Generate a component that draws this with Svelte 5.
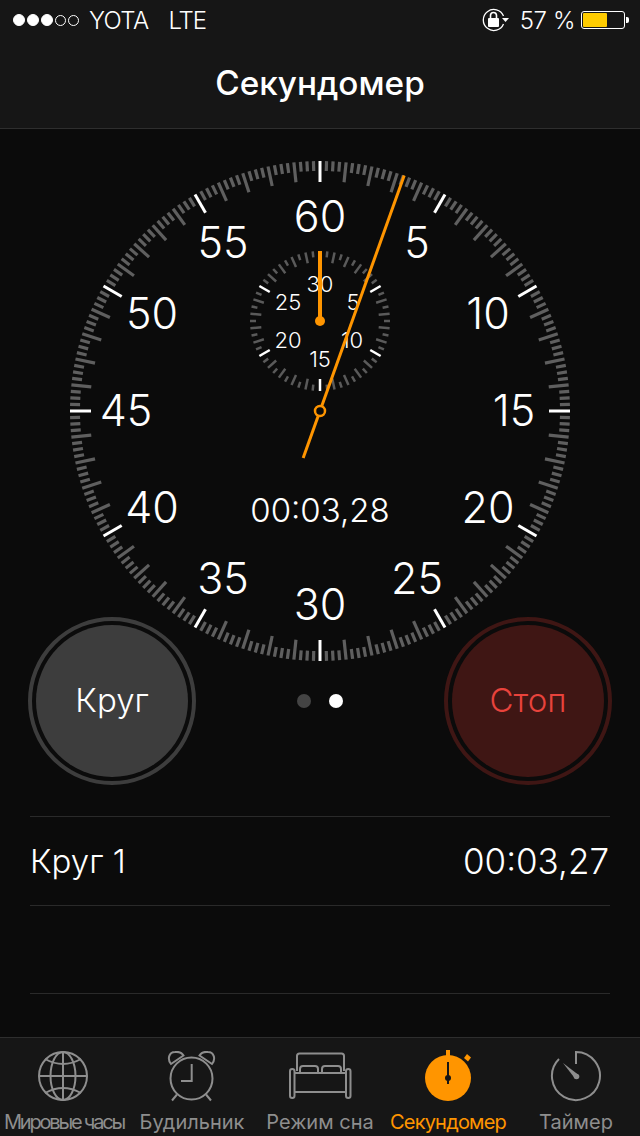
<script>
    // Dial geometry, everything in page pixels relative to the svg box
    const cx = 320;
    const cy = 282; // 410 page y minus the 128 header

    function radial(deg, r, ox = cx, oy = cy) {
        const a = (deg * Math.PI) / 180;
        return { x: ox + Math.sin(a) * r, y: oy - Math.cos(a) * r };
    }

    function tick(deg, r1, r2, ox, oy) {
        const a = radial(deg, r1, ox, oy);
        const b = radial(deg, r2, ox, oy);
        return { x1: a.x, y1: a.y, x2: b.x, y2: b.y };
    }

    const bigTicks = Array.from({ length: 240 }, (_, i) => {
        const major = i % 20 === 0;
        const mid = i % 4 === 0;
        return {
            ...tick(i * 1.5, 250, major ? 229 : mid ? 230 : 240),
            cls: major ? 'tick-major' : 'tick-minor'
        };
    });

    const bigLabels = [60, 5, 10, 15, 20, 25, 30, 35, 40, 45, 50, 55].map((n, i) => {
        const p = radial(i * 30, 194);
        return { n, x: p.x, y: p.y - 1 };
    });

    const subY = cy - 90;
    const subTicks = Array.from({ length: 60 }, (_, i) => {
        const major = i % 10 === 0;
        const mid = i % 2 === 0;
        return {
            ...tick(i * 6, 70, major ? 58 : mid ? 59 : 64, cx, subY),
            cls: major ? 'sub-major' : 'sub-minor'
        };
    });

    const subLabels = [
        { n: 30, x: 320, y: 155 },
        { n: 5, x: 353, y: 173 },
        { n: 10, x: 352, y: 211 },
        { n: 15, x: 320, y: 230 },
        { n: 20, x: 288, y: 211 },
        { n: 25, x: 288, y: 173 }
    ];

    const handDeg = 19.68;
    const handTip = radial(handDeg, 250);
    const handTail = radial(handDeg, -50);

    const tabs = ['Мировые часы', 'Будильник', 'Режим сна', 'Секундомер', 'Таймер'];
</script>

<div class="phone">
    <header class="top">
        <div class="status">
            <div class="signal">
                {#each [1, 1, 1, 0, 0] as on}
                    <span class="dot" class:on></span>
                {/each}
                <span class="carrier">YOTA</span>
                <span class="net">LTE</span>
            </div>
            <div class="status-right">
                <svg width="28" height="26" viewBox="0 0 28 26" class="lock">
                    <path d="M22.5 9 A10.5 10.5 0 1 0 22.5 17" fill="none" stroke="#fff" stroke-width="1.3" />
                    <path d="M21 11 h7 l-3.5 4 z" fill="#fff" />
                    <rect x="7" y="11" width="11" height="9" rx="1" fill="#fff" />
                    <path d="M9.5 11 V8.5 a3 3 0 0 1 6 0 V11" fill="none" stroke="#fff" stroke-width="1.6" />
                </svg>
                <span class="percent">57 %</span>
                <div class="battery"><div class="charge"></div></div>
                <div class="nub"></div>
            </div>
        </div>
        <h1>Секундомер</h1>
    </header>

    <main>
        <svg class="dial" width="640" height="532" viewBox="0 0 640 532">
            {#each bigTicks as t}
                <line x1={t.x1} y1={t.y1} x2={t.x2} y2={t.y2} class={t.cls} />
            {/each}
            {#each bigLabels as l}
                <text x={l.x} y={l.y} class="big-label" text-anchor="middle" dominant-baseline="central">{l.n}</text>
            {/each}

            {#each subTicks as t}
                <line x1={t.x1} y1={t.y1} x2={t.x2} y2={t.y2} class={t.cls} />
            {/each}
            {#each subLabels as l}
                <text x={l.x} y={l.y} class="sub-label" text-anchor="middle" dominant-baseline="central">{l.n}</text>
            {/each}

            <text x={cx} y="381" class="readout" text-anchor="middle" dominant-baseline="central">00:03,28</text>

            <line x1={cx} y1={subY} x2={cx} y2={subY - 70} class="sub-hand" />
            <circle cx={cx} cy={subY} r="5" fill="#ff9500" />

            <line x1={handTail.x} y1={handTail.y} x2={handTip.x} y2={handTip.y} class="hand" />
            <circle cx={cx} cy={cy} r="5" fill="#0b0b0b" stroke="#ff9500" stroke-width="2.5" />
        </svg>

        <div class="controls">
            <button class="round lap"><span>Круг</span></button>
            <div class="pager">
                <span class="page"></span>
                <span class="page current"></span>
            </div>
            <button class="round stop"><span>Стоп</span></button>
        </div>

        <div class="laps">
            <div class="lap-row">
                <span>Круг 1</span>
                <span class="lap-time">00:03,27</span>
            </div>
            <div class="lap-row"></div>
        </div>
    </main>

    <nav>
        {#each tabs as label, i}
            <div class="tab" class:active={i === 3}>
                <div class="icon">
                    {#if i === 0}
                        <svg width="52" height="52" viewBox="0 0 52 52" fill="none" stroke="#8e8e8e" stroke-width="2">
                            <circle cx="25" cy="25" r="24" />
                            <ellipse cx="25" cy="25" rx="12.5" ry="24" />
                            <line x1="25" y1="1" x2="25" y2="49" />
                            <line x1="1" y1="25" x2="49" y2="25" />
                            <path d="M7 8 Q25 18 43 8" />
                            <path d="M7 42 Q25 32 43 42" />
                        </svg>
                    {:else if i === 1}
                        <svg width="52" height="52" viewBox="0 0 52 52" fill="none" stroke="#8e8e8e" stroke-width="2">
                            <circle cx="25.5" cy="27.5" r="21" />
                            <path d="M5 13 C1 8 3 1 9 1 C13 0.5 16 2 17.5 4.5 Z" />
                            <path d="M46 13 C50 8 48 1 42 1 C38 0.5 35 2 33.5 4.5 Z" />
                            <path d="M25.7 13 V30 H15" />
                            <line x1="11" y1="43.5" x2="6" y2="49.5" />
                            <line x1="40" y1="43.5" x2="45" y2="49.5" />
                        </svg>
                    {:else if i === 2}
                        <svg width="64" height="52" viewBox="0 0 64 52" fill="none" stroke="#8e8e8e" stroke-width="2" stroke-linejoin="round">
                            <path d="M9 20 V5 a2.5 2.5 0 0 1 2.5 -2.5 H53.5 a2.5 2.5 0 0 1 2.5 2.5 V20" />
                            <path d="M12 22 V18 a3 3 0 0 1 3 -3 H27 a3 3 0 0 1 3 3 V22" />
                            <path d="M34 22 V18 a3 3 0 0 1 3 -3 H50 a3 3 0 0 1 3 3 V22" />
                            <path d="M6 22 H58" />
                            <path d="M6 41 H58" />
                            <rect x="2" y="18" width="4.5" height="29" rx="2.25" />
                            <rect x="58" y="18" width="4.5" height="29" rx="2.25" />
                        </svg>
                    {:else if i === 3}
                        <svg width="54" height="54" viewBox="0 0 54 54">
                            <rect x="25" y="1" width="4" height="7" fill="#ff9500" />
                            <path d="M43 9 l3 -4 l4 3.5 l-3 4 z" fill="#ff9500" />
                            <circle cx="27" cy="29" r="23" fill="#ff9500" />
                            <line x1="27" y1="13" x2="27" y2="35" stroke="#161616" stroke-width="2" />
                            <circle cx="27" cy="29" r="3" fill="#161616" />
                        </svg>
                    {:else}
                        <svg width="52" height="52" viewBox="0 0 52 52" fill="none" stroke="#8e8e8e" stroke-width="2">
                            <path d="M26 13 V1 A24 24 0 1 1 9 8" />
                            <path d="M13 12 L28 23.5 L25 27.5 Z" fill="#8e8e8e" stroke="none" />
                            <circle cx="26.5" cy="25.5" r="2.8" fill="#8e8e8e" stroke="none" />
                        </svg>
                    {/if}
                </div>
                <span class="tab-label" class:tight={i === 0} class:snug={i === 3}>{label}</span>
            </div>
        {/each}
    </nav>
</div>

<style>
    :global(body) {
        margin: 0;
        background: #0b0b0b;
    }
    .phone {
        width: 640px;
        height: 1136px;
        display: flex;
        flex-direction: column;
        background: #0b0b0b;
        color: #fff;
        font-family: Inter, Roboto, "Liberation Sans", sans-serif;
        overflow: hidden;
    }
    .top {
        background: #161616;
        border-bottom: 1px solid #2e2e2e;
        height: 128px;
        flex: none;
    }
    .status {
        height: 40px;
        display: flex;
        justify-content: space-between;
        align-items: center;
        padding: 0 11px 0 13px;
        font-weight: 300;
        font-size: 24px;
    }
    .signal,
    .status-right {
        display: flex;
        align-items: center;
    }
    .dot {
        width: 11px;
        height: 11px;
        border-radius: 50%;
        border: 1px solid #fff;
        margin-right: 2px;
        box-sizing: border-box;
    }
    .dot.on {
        background: #fff;
        width: 12px;
        height: 12px;
    }
    .carrier {
        margin-left: 8px;
        letter-spacing: -0.6px;
    }
    .net {
        margin-left: 20px;
        letter-spacing: -1.2px;
    }
    .lock {
        margin-right: 11px;
    }
    .percent {
        margin-right: 6px;
        letter-spacing: -0.4px;
    }
    .battery {
        width: 44px;
        height: 18px;
        border: 1px solid #fff;
        border-radius: 3px;
        box-sizing: border-box;
        padding: 1px;
    }
    .charge {
        width: 24px;
        height: 100%;
        background: #ffcc00;
        border-radius: 1px;
    }
    .nub {
        width: 3px;
        height: 6px;
        margin-left: 1px;
        background: #fff;
        border-radius: 0 2px 2px 0;
    }
    h1 {
        margin: 0;
        height: 88px;
        line-height: 87px;
        text-align: center;
        font-size: 33.3px;
        font-weight: 500;
    }
    main {
        flex: 1;
        display: flex;
        flex-direction: column;
        min-height: 0;
    }
    .dial {
        display: block;
        flex: none;
    }
    .tick-major {
        stroke: #fff;
        stroke-width: 3;
    }
    .tick-minor {
        stroke: #5f5f5f;
        stroke-width: 3.2;
    }
    .sub-major {
        stroke: #fff;
        stroke-width: 2.5;
    }
    .sub-minor {
        stroke: #5a5a5a;
        stroke-width: 2.5;
    }
    .big-label {
        fill: #fff;
        font-size: 43px;
        font-weight: 300;
    }
    .sub-label {
        fill: #fff;
        font-size: 22px;
        font-weight: 300;
    }
    .readout {
        fill: #fff;
        font-size: 33px;
        font-weight: 300;
    }
    .hand {
        stroke: #ff9500;
        stroke-width: 3;
    }
    .sub-hand {
        stroke: #ff9500;
        stroke-width: 4;
    }
    .controls {
        margin-top: -44px;
        height: 168px;
        padding: 0 28px;
        display: flex;
        align-items: center;
        justify-content: space-between;
        position: relative;
    }
    .round {
        width: 168px;
        height: 168px;
        border-radius: 50%;
        padding: 0;
        background: transparent;
        border: 4px solid;
        box-sizing: border-box;
        display: flex;
        align-items: center;
        justify-content: center;
        font-family: inherit;
        font-size: 33px;
        font-weight: 300;
    }
    .round span {
        width: 152px;
        height: 150px;
        padding-bottom: 2px;
        border-radius: 50%;
        display: flex;
        align-items: center;
        justify-content: center;
    }
    .lap {
        border-color: #3d3d3d;
        color: #fff;
    }
    .lap span {
        background: #3d3d3d;
    }
    .stop {
        border-color: #3f1614;
        color: #e8433c;
    }
    .stop span {
        background: #3f1614;
    }
    .pager {
        display: flex;
        gap: 18px;
    }
    .page {
        width: 14px;
        height: 14px;
        border-radius: 50%;
        background: #444;
    }
    .page.current {
        background: #fff;
    }
    .laps {
        margin: 31px 30px 0;
        border-top: 1px solid #2a2a2a;
    }
    .lap-row {
        height: 88.5px;
        box-sizing: border-box;
        border-bottom: 1px solid #2a2a2a;
        display: flex;
        align-items: center;
        justify-content: space-between;
        font-size: 33px;
        font-weight: 300;
    }
    .lap-time {
        font-size: 35px;
        margin-right: 1px;
    }
    nav {
        height: 99px;
        box-sizing: border-box;
        flex: none;
        background: #161616;
        border-top: 1px solid #2e2e2e;
        display: grid;
        grid-template-columns: repeat(5, 128px);
    }
    .tab {
        display: flex;
        flex-direction: column;
        align-items: center;
        color: #8e8e8e;
    }
    .tab.active {
        color: #ff9500;
    }
    .icon {
        height: 65px;
        display: flex;
        align-items: flex-end;
        justify-content: center;
    }
    .tab-label {
        margin-top: 7px;
        font-size: 20px;
        line-height: 24px;
        white-space: nowrap;
    }
    .tab-label.tight {
        letter-spacing: -2.2px;
    }
    .tab-label.snug {
        letter-spacing: -0.8px;
    }
</style>
